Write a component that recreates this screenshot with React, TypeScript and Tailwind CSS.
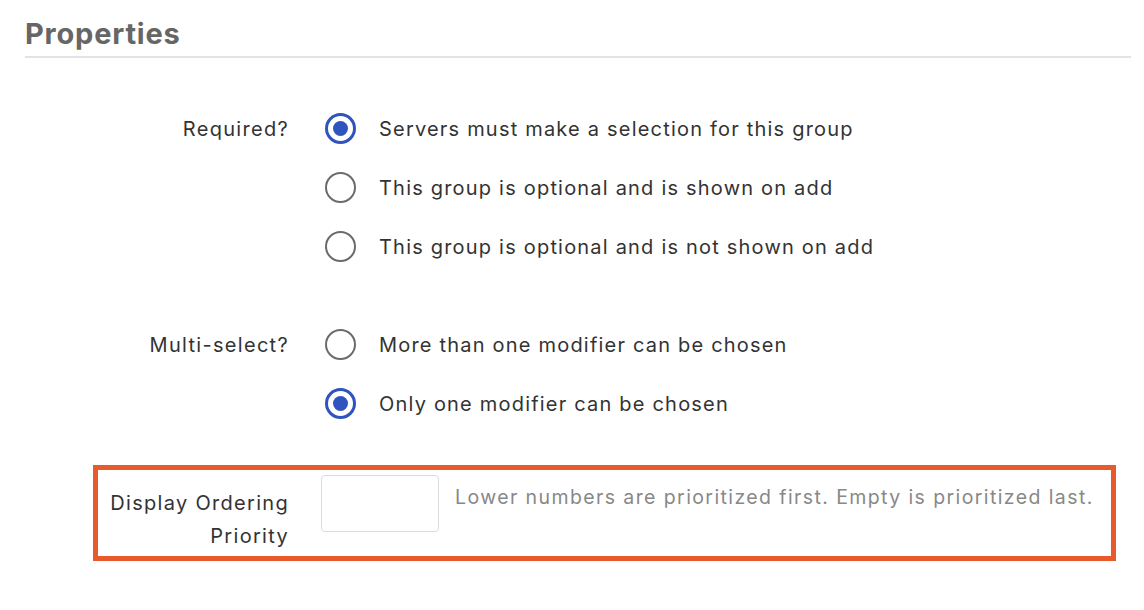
import { useState } from 'react';

type Option = { value: string; label: string };

const requiredOptions: Option[] = [
    { value: 'required', label: 'Servers must make a selection for this group' },
    { value: 'optional-shown', label: 'This group is optional and is shown on add' },
    { value: 'optional-hidden', label: 'This group is optional and is not shown on add' },
];

const multiOptions: Option[] = [
    { value: 'multi', label: 'More than one modifier can be chosen' },
    { value: 'single', label: 'Only one modifier can be chosen' },
];

function Radio({ checked }: { checked: boolean }) {
    if (checked) {
        return (
            <span className="w-[31px] h-[31px] shrink-0 rounded-full border-[3.5px] border-[#2f54bf] flex items-center justify-center bg-white">
                <span className="w-[15px] h-[15px] rounded-full bg-[#2f54bf]" />
            </span>
        );
    }
    return <span className="w-[31px] h-[31px] shrink-0 rounded-full border-2 border-[#6b6b6b] bg-white" />;
}

function RadioGroup({ label, options, value, onChange }: { label: string; options: Option[]; value: string; onChange: (v: string) => void }) {
    return (
        <div className="flex pl-[73px]">
            <div className="w-[191px] h-[59px] flex items-center justify-end text-[20px] tracking-[1.3px] text-[#333]">{label}</div>
            <div className="flex flex-col pl-[36px]">
                {options.map(opt => (
                    <button
                        key={opt.value}
                        onClick={() => onChange(opt.value)}
                        className="h-[59px] flex items-center gap-[23px] text-left text-[20px] tracking-[1.2px] text-[#333] cursor-pointer"
                    >
                        <Radio checked={value === opt.value} />
                        <span>{opt.label}</span>
                    </button>
                ))}
            </div>
        </div>
    );
}

export default function App() {
    const [required, setRequired] = useState('required');
    const [multi, setMulti] = useState('single');
    const [priority, setPriority] = useState('');

    return (
        <div className="w-[1144px] h-[610px] bg-white pl-[25px] pr-[13px] font-['Inter',sans-serif]">
            <h2 className="pt-[18px] pb-[6px] text-[29px] leading-[32px] font-bold tracking-[0.8px] text-[#666]">Properties</h2>
            <div className="h-[2px] bg-[#e3e3e3]" />

            <div className="mt-[41px]">
                <RadioGroup label="Required?" options={requiredOptions} value={required} onChange={setRequired} />
            </div>

            <div className="mt-[39px]">
                <RadioGroup label="Multi-select?" options={multiOptions} value={multi} onChange={setMulti} />
            </div>

            <div className="mt-[32px] ml-[68px] mr-[15px] h-[96px] border-[5px] border-[#e8592b] flex items-start">
                <div className="w-[191px] pt-[17px] text-right text-[20px] leading-[33px] tracking-[1.3px] text-[#333]">
                    Display Ordering
                    <br />
                    Priority
                </div>
                <input
                    value={priority}
                    onChange={e => setPriority(e.target.value)}
                    className="ml-[32px] mt-[5px] w-[118px] h-[57px] border border-[#dcdcdc] rounded-[4px] outline-none px-2 text-[19px]"
                />
                <p className="ml-[16px] mt-[13px] text-[19.5px] leading-[28px] tracking-[1.4px] text-[#888]">
                    Lower numbers are prioritized first. Empty is prioritized last.
                </p>
            </div>
        </div>
    );
}
